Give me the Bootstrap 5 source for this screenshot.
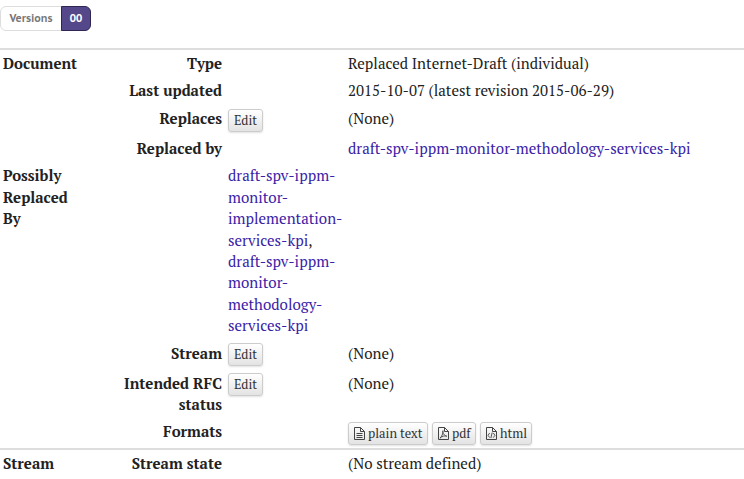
<!DOCTYPE html>
<html lang="en">
<head>
<meta charset="utf-8">
<meta name="viewport" content="width=device-width, initial-scale=1">
<title>Document status</title>
<link href="https://cdn.jsdelivr.net/npm/bootstrap@5.3.0/dist/css/bootstrap.min.css" rel="stylesheet">
<style>
body { font: 15px/21.4px "PT Serif", "Liberation Serif", serif; color: #222; letter-spacing: .02px; overflow: hidden; }
a { color: #3a22a8; text-decoration: none; }
.versions { height: 25px; margin: 6px 0 17px; width: 91px; }
.versions .btn { font: bold 10.5px/15px "PT Sans Caption", "Open Sans", sans-serif; padding: 4px 0; letter-spacing: 0; color: #777; border-color: #ddd; }
.versions .btn:first-child { width: 62px; opacity: 1; background: #fff; }
.versions .btn:last-child { width: 30px; background: #54488a; border-color: #2f2752; color: #fff; flex: none; }
.meta { table-layout: fixed; width: 772px; color: #222; border-collapse: separate; border-spacing: 0; margin: 0; }
.meta th, .meta td { padding: 3px; vertical-align: top; }
.meta th { letter-spacing: 0; }
.meta .section-start > * { border-top: 2px solid #ddd; }
.meta .possible > * { padding-top: 2.6px; padding-bottom: 2px; }
.meta .format-row th { padding-top: 2px; }
.h27 { height: 27px; } .h28 { height: 28px; } .h29 { height: 29px; } .h30 { height: 30px; }
.h49 { height: 48px; } .h177 { height: 177px; }
.tool { display: inline-flex; align-items: center; height: 23px; padding: 0 5px; font-size: 12.8px; line-height: 21px; letter-spacing: 0; color: #333; border: 1px solid #ccc; border-radius: 3px; background: linear-gradient(#fff, #e3e3e3); box-shadow: 0 1px 2px rgba(0,0,0,.12); vertical-align: top; white-space: nowrap; }
.edit { width: 35px; justify-content: center; }
.tool svg { width: 11px; height: 13px; margin-right: 3px; fill: none; stroke: #444; flex: none; }
.formats { gap: 4px; }
#f-text { width: 80px; } #f-pdf { width: 44px; } #f-html { width: 52px; }
</style>
</head>
<body>
<div class="btn-group versions d-flex">
  <span class="btn">Versions</span><a class="btn" href="#">00</a>
</div>
<table class="meta">
  <colgroup><col style="width:90px"><col style="width:135px"><col style="width:120px"><col></colgroup>
  <tbody>
    <tr class="section-start h29"><th>Document</th><th class="text-end">Type</th><td></td><td>Replaced Internet-Draft (individual)</td></tr>
    <tr class="h28"><th></th><th class="text-end">Last updated</th><td></td><td>2015-10-07 (latest revision 2015-06-29)</td></tr>
    <tr class="h30"><th></th><th class="text-end">Replaces</th><td class="pt-1"><a class="tool edit" href="#">Edit</a></td><td>(None)</td></tr>
    <tr class="h27"><th></th><th class="text-end">Replaced by</th><td></td><td class="text-nowrap"><a href="#">draft-spv-ippm-monitor-methodology-services-kpi</a></td></tr>
    <tr class="h177 possible"><th>Possibly<br>Replaced<br>By</th><th></th><td class="text-nowrap"><a href="#">draft-spv-ippm-<br>monitor-<br>implementation-<br>services-kpi</a>,<br><a href="#">draft-spv-ippm-<br>monitor-<br>methodology-<br>services-kpi</a></td><td></td></tr>
    <tr class="h30"><th></th><th class="text-end">Stream</th><td><a class="tool edit" href="#">Edit</a></td><td>(None)</td></tr>
    <tr class="h49"><th></th><th class="text-end">Intended RFC<br>status</th><td><a class="tool edit" href="#">Edit</a></td><td>(None)</td></tr>
    <tr class="h29 format-row"><th></th><th class="text-end">Formats</th><td></td><td><div class="d-flex formats">
      <a class="tool" id="f-text" href="#"><svg viewBox="0 0 11 13"><path d="M.5.5h6l4 4v8H.5zM6.5.5v4h4M2.5 6.5h6M2.5 8.5h6M2.5 10.5h6"/></svg>plain text</a>
      <a class="tool" id="f-pdf" href="#"><svg viewBox="0 0 11 13"><path d="M.5.5h6l4 4v8H.5zM6.5.5v4h4"/><path stroke-width=".9" d="M2 11.2C3.5 10 5.3 6.500 5 3.700C4.300 4.500 5 8 8.800 9.200C6.500 8.500 4 9 2 11.200"/></svg>pdf</a>
      <a class="tool" id="f-html" href="#"><svg viewBox="0 0 11 13"><path d="M.5.5h6l4 4v8H.5zM6.5.5v4h4"/><path stroke-width=".9" d="M3.700 6L2 8.300L3.700 10.600M7.300 6L9 8.300L7.300 10.600M6.200 5.500L4.900 11"/></svg>html</a>
    </div></td></tr>
    <tr class="section-start h29"><th>Stream</th><th class="text-end">Stream state</th><td></td><td>(No stream defined)</td></tr>
  </tbody>
</table>
<script src="https://cdn.jsdelivr.net/npm/bootstrap@5.3.0/dist/js/bootstrap.bundle.min.js"></script>
</body>
</html>
